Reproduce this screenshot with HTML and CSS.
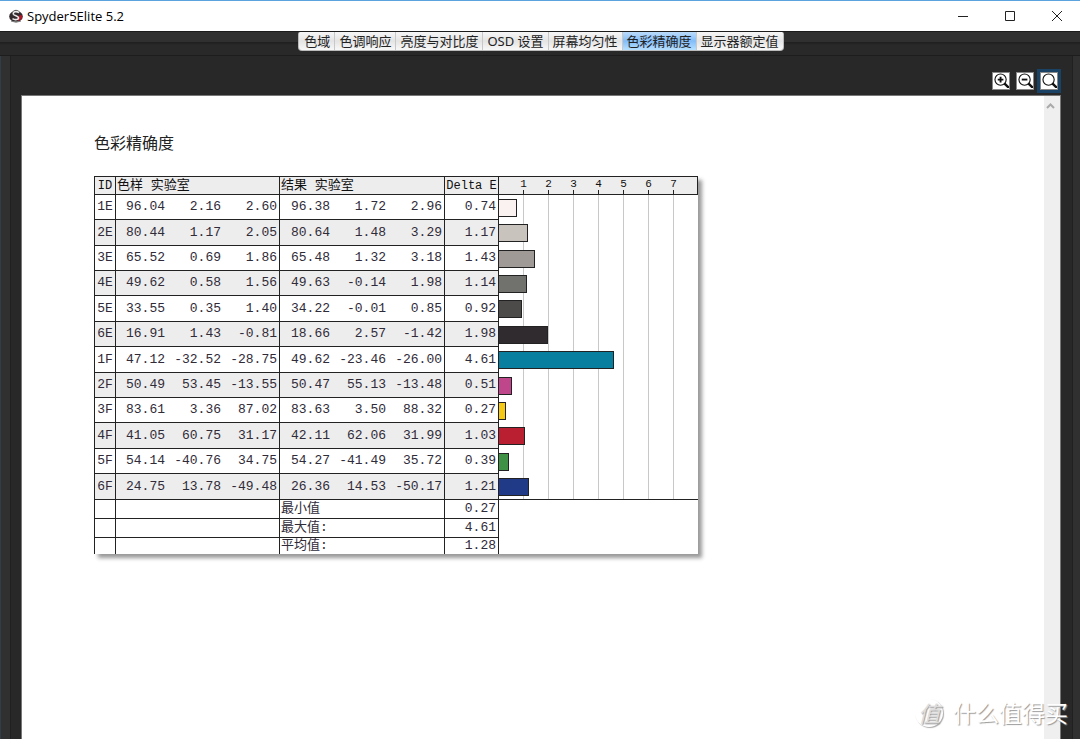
FILE: index.html
```html
<!DOCTYPE html>
<html lang="zh-CN">
<head>
<meta charset="utf-8">
<title>Spyder5Elite 5.2</title>
<link rel="stylesheet" href="styles.css">
</head>
<body>
<div class="window">
  <header class="titlebar">
    <svg class="logo" viewBox="0 0 14 14" aria-hidden="true">
      <ellipse cx="7" cy="7.4" rx="6.8" ry="5.4" fill="#332a2d"/>
      <path d="M2.500 3.600Q7-2 11.500 3.600z" fill="#444"/>
      <path d="M9 8q3-3.500 4.200-1 .3 4-4.200 5z" fill="#b01525"/>
      <path d="M10 3.600C7 1.600 3.600 3 4.400 5.200c.7 1.800 5 1.300 5.100 3.500.1 2-3.400 2.600-6 .9" fill="none" stroke="#e8e8e8" stroke-width="1.600"/>
      <path d="M2 12q5 2.500 10 0" fill="none" stroke="#777"/>
    </svg>
    <span class="app-name">Spyder5Elite 5.2</span>
    <div class="controls">
      <button class="control" aria-label="最小化"><svg viewBox="0 0 12 12"><path d="M1 6.500h10"/></svg></button>
      <button class="control" aria-label="最大化"><svg viewBox="0 0 12 12"><path d="M1.500 1.500h9v9h-9z"/></svg></button>
      <button class="control" aria-label="关闭"><svg viewBox="0 0 12 12"><path d="M1 1l10 10M11 1L1 11"/></svg></button>
    </div>
  </header>
  <nav class="tabbar">
    <div class="tabs">
      <button class="tab">色域</button>
      <button class="tab">色调响应</button>
      <button class="tab">亮度与对比度</button>
      <button class="tab">OSD 设置</button>
      <button class="tab">屏幕均匀性</button>
      <button class="tab active">色彩精确度</button>
      <button class="tab">显示器额定值</button>
    </div>
  </nav>
  <div class="workspace">
    <div class="panel">
      <div class="toolbar">
        <button class="zoom" aria-label="放大"><svg viewBox="0 0 16 16"><circle class="lens" cx="7" cy="7" r="6"/><path class="sign" d="M4 7h6M7 4v6"/><path class="handle" d="M11 11l5 5"/></svg></button>
        <button class="zoom" aria-label="缩小"><svg viewBox="0 0 16 16"><circle class="lens" cx="7" cy="7" r="6"/><path class="sign" d="M4 7h6"/><path class="handle" d="M11 11l5 5"/></svg></button>
        <button class="zoom selected" aria-label="适合窗口"><svg viewBox="0 0 16 16"><circle class="lens" cx="7" cy="7" r="6"/><path class="handle" d="M11 11l5 5"/></svg></button>
      </div>
      <div class="viewer">
        <main class="report">
          <h1>色彩精确度</h1>
          <table class="results">
            <colgroup><col class="c-id"><col class="c-first"><col class="c-num"><col class="c-last"><col class="c-first2"><col class="c-num"><col class="c-last"><col class="c-delta"><col class="c-chart"></colgroup>
            <thead>
              <tr><th class="line center">ID</th><th class="line" colspan="3">色样 实验室</th><th class="line" colspan="3">结果 实验室</th><th class="line center">Delta E</th>
              <th class="axis"><div class="ticks"><span>1</span><span>2</span><span>3</span><span>4</span><span>5</span><span>6</span><span>7</span></div></th></tr>
            </thead>
            <tbody>
              <tr><td class="line center">1E</td><td>96.04</td><td>2.16</td><td class="line">2.60</td><td>96.38</td><td>1.72</td><td class="line">2.96</td><td class="line">0.74</td><td class="chart"><div class="bar" style="width:18px;background:#faf2f0"></div></td></tr>
              <tr><td class="line center">2E</td><td>80.44</td><td>1.17</td><td class="line">2.05</td><td>80.64</td><td>1.48</td><td class="line">3.29</td><td class="line">1.17</td><td class="chart"><div class="bar" style="width:29px;background:#c8c3bd"></div></td></tr>
              <tr><td class="line center">3E</td><td>65.52</td><td>0.69</td><td class="line">1.86</td><td>65.48</td><td>1.32</td><td class="line">3.18</td><td class="line">1.43</td><td class="chart"><div class="bar" style="width:36px;background:#9f9a95"></div></td></tr>
              <tr><td class="line center">4E</td><td>49.62</td><td>0.58</td><td class="line">1.56</td><td>49.63</td><td>-0.14</td><td class="line">1.98</td><td class="line">1.14</td><td class="chart"><div class="bar" style="width:28px;background:#71726e"></div></td></tr>
              <tr><td class="line center">5E</td><td>33.55</td><td>0.35</td><td class="line">1.40</td><td>34.22</td><td>-0.01</td><td class="line">0.85</td><td class="line">0.92</td><td class="chart"><div class="bar" style="width:23px;background:#4c4b4a"></div></td></tr>
              <tr><td class="line center">6E</td><td>16.91</td><td>1.43</td><td class="line">-0.81</td><td>18.66</td><td>2.57</td><td class="line">-1.42</td><td class="line">1.98</td><td class="chart"><div class="bar" style="width:49px;background:#302b2e"></div></td></tr>
              <tr><td class="line center">1F</td><td>47.12</td><td>-32.52</td><td class="line">-28.75</td><td>49.62</td><td>-23.46</td><td class="line">-26.00</td><td class="line">4.61</td><td class="chart"><div class="bar" style="width:115px;background:#087f9f"></div></td></tr>
              <tr><td class="line center">2F</td><td>50.49</td><td>53.45</td><td class="line">-13.55</td><td>50.47</td><td>55.13</td><td class="line">-13.48</td><td class="line">0.51</td><td class="chart"><div class="bar" style="width:13px;background:#c0468c"></div></td></tr>
              <tr><td class="line center">3F</td><td>83.61</td><td>3.36</td><td class="line">87.02</td><td>83.63</td><td>3.50</td><td class="line">88.32</td><td class="line">0.27</td><td class="chart"><div class="bar" style="width:7px;background:#f3c916"></div></td></tr>
              <tr><td class="line center">4F</td><td>41.05</td><td>60.75</td><td class="line">31.17</td><td>42.11</td><td>62.06</td><td class="line">31.99</td><td class="line">1.03</td><td class="chart"><div class="bar" style="width:26px;background:#b91e31"></div></td></tr>
              <tr><td class="line center">5F</td><td>54.14</td><td>-40.76</td><td class="line">34.75</td><td>54.27</td><td>-41.49</td><td class="line">35.72</td><td class="line">0.39</td><td class="chart"><div class="bar" style="width:10px;background:#3f9145"></div></td></tr>
              <tr><td class="line center">6F</td><td>24.75</td><td>13.78</td><td class="line">-49.48</td><td>26.36</td><td>14.53</td><td class="line">-50.17</td><td class="line">1.21</td><td class="chart"><div class="bar" style="width:30px;background:#203a87"></div></td></tr>
            </tbody>
            <tfoot>
              <tr><td class="line"></td><td class="line" colspan="3"></td><th class="line" colspan="3">最小值</th><td class="line">0.27</td><td class="blank"></td></tr>
              <tr><td class="line"></td><td class="line" colspan="3"></td><th class="line" colspan="3">最大值:</th><td class="line">4.61</td><td class="blank"></td></tr>
              <tr><td class="line"></td><td class="line" colspan="3"></td><th class="line" colspan="3">平均值:</th><td class="line">1.28</td><td class="blank"></td></tr>
            </tfoot>
          </table>
        </main>
        <div class="scrollbar"><button class="scroll-up" aria-label="向上滚动"><svg viewBox="0 0 9 6"><path d="M1 5l3.500-3.500L8 5"/></svg></button></div>
      </div>
    </div>
  </div>
  <div class="watermark"><span class="seal">值</span><span>什么值得买</span></div>
</div>
</body>
</html>
```
FILE: styles.css
```css
* { box-sizing: border-box; }
body {
  margin: 0;
  background: #282828;
  font-family: "Noto Sans", "Noto Sans CJK SC", sans-serif;
}
button { margin: 0; padding: 0; border: 0; background: none; font: inherit; }
svg { display: block; }

.window {
  position: relative;
  display: flex;
  flex-direction: column;
  height: 100vh;
  overflow: hidden;
}

.titlebar {
  display: flex;
  align-items: center;
  flex: 0 0 31px;
  padding-left: 9px;
  border-top: 1px solid #5ba3df;
  background: #fff;
  color: #000;
}
.logo { width: 14px; height: 14px; margin-right: 4px; }
.app-name { font: 13px/20px "Open Sans", sans-serif; }
.controls { display: flex; margin-left: auto; }
.control { display: grid; place-items: center; width: 46px; height: 30px; }
.control svg { width: 12px; height: 12px; fill: none; stroke: #222; stroke-width: 1; }
.controls { gap: 1px; }

.tabbar {
  display: flex;
  justify-content: center;
  align-items: flex-start;
  flex: 0 0 25px;
  padding-left: 2px;
  border-top: 1px solid #1b1b1b;
  border-bottom: 1px solid #1d1d1d;
  background: linear-gradient(#303030 10px, #1e1e1e 10px, #292929 13px);
}
.tabs {
  display: flex;
  overflow: hidden;
  border: 1px solid #bbb;
  border-top: 0;
  border-radius: 2px 2px 4px 4px;
  background: linear-gradient(#f6f6f6, #e4e4e4 50%, #f8f8f8);
}
.tab { padding: 0 4px 0 5px; color: #222; font-size: 13px; line-height: 18px; white-space: nowrap; }
.tab + .tab { box-shadow: inset 1px 0 #c8c8c8; }
.tab.active { background: linear-gradient(#bcdcfb, #83bdf7 50%, #b7e0ff); }

.workspace {
  display: flex;
  flex: 1;
  min-height: 0;
  padding: 0 7px 0 9px;
  border-left: 1px solid #303d4a;
  background: #303030;
}
.panel {
  display: flex;
  flex: 1;
  flex-direction: column;
  padding: 0 11px 0 10px;
  border: 1px solid #202020;
  border-width: 0 1px;
  background: #282828;
}
.toolbar { display: flex; justify-content: flex-end; align-items: center; gap: 6px; flex: 0 0 39px; padding: 12px 1px 2px 0; }
.zoom { width: 18px; height: 18px; padding: 0 0 0 1px; border: 1px solid #888; background: #fff; }
.zoom.selected { margin-right: 2px; box-shadow: 0 0 0 3px #194264; }
.zoom svg { width: 15px; height: 15px; fill: none; stroke: #111; }
.lens { stroke-width: 1.200; }
.sign { stroke-width: 2; }
.handle { stroke-width: 2.500; }

.viewer { display: flex; flex: 1; min-height: 0; border: 1px solid #777; border-bottom: 0; background: #fff; }
.report { flex: 1; padding: 34px 72px 0; }
.scrollbar { flex: 0 0 16px; background: #efefef; }
.scroll-up { display: grid; place-items: center; width: 13px; height: 20px; }
.scroll-up svg { width: 9px; height: 6px; fill: none; stroke: #aaa; stroke-width: 2; }

h1 { margin: 0 0 22px; color: #222; font: 16px/24px "Noto Sans CJK SC", sans-serif; }

.results {
  table-layout: fixed;
  width: 604px;
  border: 1px solid #222;
  border-width: 1px 0 0 1px;
  border-spacing: 0;
  background: #fff;
  box-shadow: 4px 4px 4px #999;
  color: #302b38;
  font: 13px/16px "Liberation Mono", "Noto Sans CJK SC", monospace;
}
.c-id { width: 21px; }
.c-first { width: 51px; }
.c-first2 { width: 52px; }
.c-num { width: 56px; }
.c-last { width: 57px; }
.c-delta { width: 54px; }
.c-chart { width: 199px; }

.results th, .results td { padding: 0 1px; border-bottom: 1px solid #222; white-space: nowrap; }
.results th { font-weight: normal; text-align: left; }
.results td { padding-right: 2px; text-align: right; }
.results .line { border-right: 1px solid #222; }
.results .center { text-align: center; padding: 0; }
thead tr { height: 18px; background: #ededed; }
thead th { color: #111; line-height: 16px; }
thead .center { font-size: 12px; }
tbody tr { height: 25px; }
tbody tr:nth-child(5n+2), tbody tr:nth-child(5n) { height: 26px; }
tbody tr:nth-child(even) { background: #ededed; }
tfoot tr { height: 19px; }
tfoot tr:last-child { height: 16px; }
tfoot tr:last-child > * { border-bottom: 0; }
.results .blank { border-bottom: 0; }

.results .axis {
  padding: 0 0 0 12px;
  border-right: 1px solid #222;
  background: repeating-linear-gradient(to right, transparent 0 24px, #222 24px 25px) 0 100% / 100% 4px no-repeat;
}
.ticks { display: flex; font-size: 11px; line-height: 12px; padding-bottom: 4px; }
.ticks span { flex: 0 0 25px; text-align: center; }
.results .chart {
  padding: 0;
  border-bottom: 0;
  background: repeating-linear-gradient(to right, #fff 0 24px, #c8c8c8 24px 25px);
}
tbody tr:last-child .chart { border-bottom: 1px solid #222; }
.bar { height: 18px; border: 1px solid #222; border-left: 0; }

.watermark {
  position: absolute;
  right: 12px;
  bottom: 9px;
  display: flex;
  align-items: center;
  gap: 10px;
  color: #fff;
  font-size: 23px;
  line-height: 34px;
  text-shadow: 1px 1px 1px #999;
}
.seal {
  width: 28px;
  height: 28px;
  border-radius: 50%;
  box-shadow: 1px 1px 1px #aaa;
  color: #ddd;
  font-size: 22px;
  font-style: italic;
  line-height: 28px;
  text-align: center;
}
```
